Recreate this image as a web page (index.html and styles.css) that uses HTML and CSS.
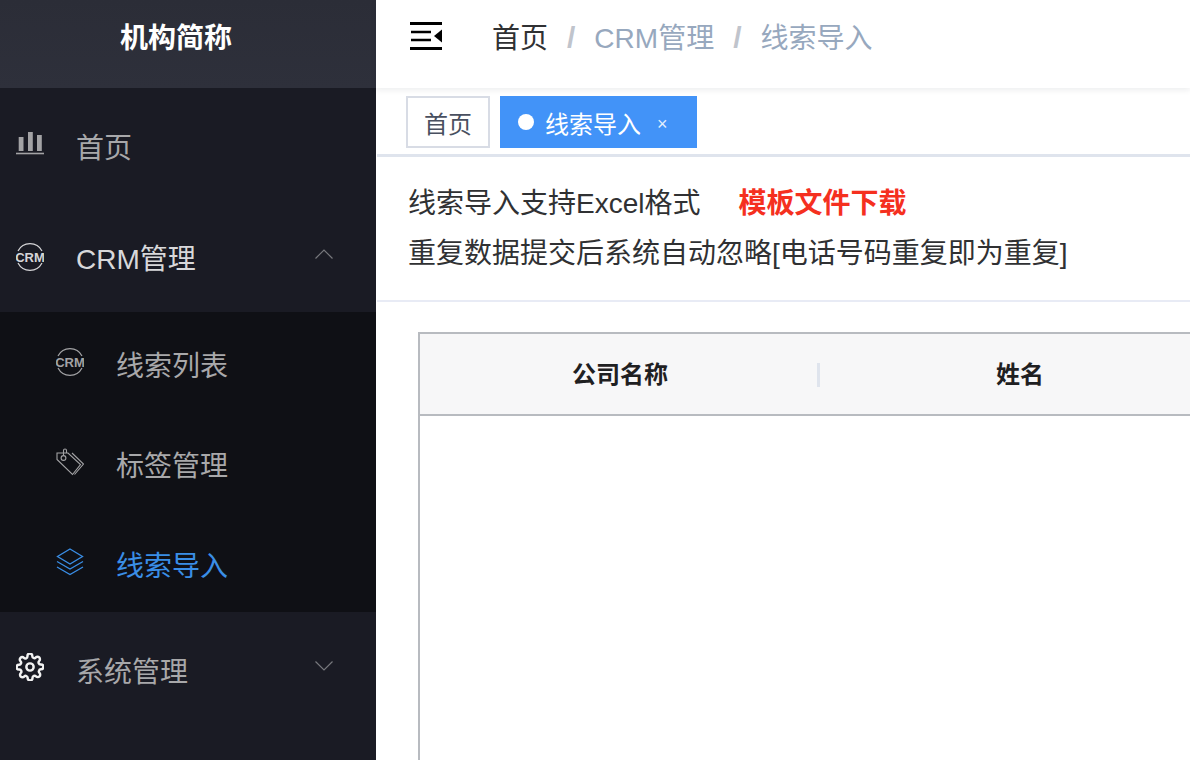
FILE: index.html
```html
<!DOCTYPE html>
<html lang="zh-CN">
<head>
  <meta charset="UTF-8" />
  <title>线索导入</title>
  <link rel="stylesheet" href="styles.css">
</head>
<body>

<div class="layout">
  <div class="sidebar">
    <div class="logo">机构简称</div>

    <div class="menu-item home">
      <svg class="icon" viewBox="0 0 28 28"><path d="M2.700 9h4.800v14H2.700zM12 4h4.800v19H12zM21 7h4.800v16H21z" fill="#a3a3a5"/><path d="M0 25.500h28" stroke="#a3a3a5" stroke-width="1.600"/></svg>
      <span>首页</span>
    </div>

    <div class="menu-item crm">
      <svg class="icon" viewBox="0 0 28 28"><path d="M2 8A13.500 13.500 0 0 1 26 8M2 20A13.500 13.500 0 0 0 26 20" fill="none" stroke="#d6d6d8" stroke-width="1.200"/><text x="14" y="18.700" class="crm-text" fill="#d6d6d8">CRM</text></svg>
      <span>CRM管理</span>
      <svg class="arrow" viewBox="0 0 18 10"><path d="M0.500 9.500L9 1l8.500 8.500" fill="none" stroke="#77787d" stroke-width="1.200"/></svg>
    </div>

    <div class="submenu">
      <div class="sub-item">
        <svg class="icon" viewBox="0 0 28 28"><path d="M2 8A13.500 13.500 0 0 1 26 8M2 20A13.500 13.500 0 0 0 26 20" fill="none" stroke="#a3a3a5" stroke-width="1.200"/><text x="14" y="18.700" class="crm-text" fill="#a3a3a5">CRM</text></svg>
        <span>线索列表</span>
      </div>
      <div class="sub-item">
        <svg class="icon" viewBox="0 0 28 28" fill="none" stroke="#a3a3a5" stroke-width="1.100"><path d="M1 5h11l12.500 11.500-8 10L1 11.500z"/><path d="M16 5l11.500 11-9 10.500"/><circle cx="7.500" cy="10" r="2.400"/><path d="M7.500 7.500V2.500q0-1.500 1.500-1.500t1.500 1.500V5"/></svg>
        <span>标签管理</span>
      </div>
      <div class="sub-item active">
        <svg class="icon" viewBox="0 0 28 28" fill="none" stroke="#3a8ee6" stroke-width="1.300"><path d="M14 1l12.500 7.500L14 16 1.500 8.500z"/><path d="M1 13.500L14 21l13-7.500"/><path d="M1 19L14 26.500 27 19"/></svg>
        <span>线索导入</span>
      </div>
    </div>

    <div class="menu-item sys">
      <svg class="icon" viewBox="0.500 0.500 23 23" fill="none" stroke="#f2f2f2" stroke-width="2"><circle cx="12" cy="12" r="3"/><path d="M19.400 15a1.650 1.650 0 0 0 .33 1.820l.06.06a2 2 0 1 1-2.830 2.830l-.06-.06a1.650 1.650 0 0 0-2.820 1.170V21a2 2 0 0 1-4 0v-.09a1.650 1.650 0 0 0-2.800-1.150l-.06.06a2 2 0 1 1-2.830-2.830l.06-.06a1.650 1.650 0 0 0-1.170-2.820H3a2 2 0 0 1 0-4h.09a1.650 1.650 0 0 0 1.150-2.800l-.06-.06a2 2 0 1 1 2.830-2.830l.06.06a1.650 1.650 0 0 0 2.820-1.170V3a2 2 0 0 1 4 0v.09a1.650 1.650 0 0 0 2.800 1.150l.06-.06a2 2 0 1 1 2.830 2.830l-.06.06a1.650 1.650 0 0 0 1.170 2.820H21a2 2 0 0 1 0 4h-.09a1.650 1.650 0 0 0-1.510 1.110z"/></svg>
      <span>系统管理</span>
      <svg class="arrow" viewBox="0 0 18 10"><path d="M0.500 0.500L9 9l8.500-8.500" fill="none" stroke="#77787d" stroke-width="1.200"/></svg>
    </div>
  </div>

  <div class="main">
    <div class="navbar">
      <svg class="hamburger" viewBox="0 0 32 28"><path d="M0 1.500h32M0 26.500h32" stroke="#000" stroke-width="3"/><path d="M1 10h20M1 18h20" stroke="#000" stroke-width="2.600"/><path d="M32 7.500v13L24 14z" fill="#000"/></svg>
      <div class="breadcrumb">
        <span class="crumb-first">首页</span>
        <span class="sep">/</span>
        <span>CRM管理</span>
        <span class="sep">/</span>
        <span>线索导入</span>
      </div>
    </div>

    <div class="tabs">
      <div class="tab">首页</div>
      <div class="tab tab-active">
        <i class="dot"></i>
        <span>线索导入</span>
        <span class="close">×</span>
      </div>
    </div>

    <div class="content">
      <div class="notice">
        <div class="notice-line">线索导入支持Excel格式<a class="download">模板文件下载</a></div>
        <div class="notice-line">重复数据提交后系统自动忽略[电话号码重复即为重复]</div>
      </div>
      <div class="table-wrap">
        <div class="table">
          <div class="table-head">
            <div class="th">公司名称</div>
            <div class="th">姓名</div>
          </div>
        </div>
      </div>
    </div>
  </div>
</div>

</body>
</html>
```

FILE: styles.css
```css
* { box-sizing: border-box; }
html, body { margin: 0; height: 100%; overflow: hidden; }
body {
  font-family: "Liberation Sans", "Noto Sans CJK SC", sans-serif;
  background: #fff;
  color: #303133;
}
.layout { display: flex; width: 1190px; height: 760px; overflow: hidden; }

.sidebar { width: 376px; flex: none; background: #1a1b24; color: #a8a8aa; font-size: 28px; }
.logo {
  height: 88px;
  padding-right: 24px;
  background: linear-gradient(#2b2d37, #2e303b);
  color: #fff;
  font-size: 28px;
  font-weight: bold;
  text-align: center;
  line-height: 78px;
}
.menu-item { display: flex; align-items: center; padding-left: 16px; position: relative; }
.menu-item .icon, .sub-item .icon { width: 28px; height: 28px; flex: none; margin-right: 32px; position: relative; top: 0; }
.home { height: 120px; align-items: flex-start; padding-top: 38px; }
.crm { height: 104px; color: #d8d8da; padding-bottom: 6px; }
.sys { height: 116px; align-items: flex-start; padding-top: 38px; }
.sys .icon { top: 3px; }
.home .icon { top: 2px; }
.arrow { position: absolute; left: 315px; width: 18px; height: 10px; }
.crm .arrow { top: 41px; }
.sys .arrow { top: 49px; }

.submenu { background: #0f1015; }
.sub-item { height: 100px; display: flex; align-items: center; padding-left: 56px; padding-top: 4px; }
.sub-item .icon { top: -2px; }
.active { color: #3a8ee6; }
.crm-text { font-size: 13px; font-weight: bold; text-anchor: middle; font-family: "Liberation Sans", sans-serif; }

.main { width: 814px; flex: none; display: flex; flex-direction: column; }
.navbar {
  height: 88px;
  flex: none;
  display: flex;
  align-items: center;
  padding-left: 34px;
  padding-bottom: 16px;
  position: relative;
  box-shadow: 0 2px 6px rgba(0, 21, 41, 0.08);
}
.hamburger { width: 32px; height: 28px; flex: none; margin-right: 50px; }
.breadcrumb { display: flex; align-items: baseline; font-size: 28px; color: #97a8be; }
.crumb-first { color: #303133; }
.sep { color: #c0c4cc; margin: 0 19px; font-size: 30px; font-weight: bold; }

.tabs { height: 66px; flex: none; padding: 8px 0 0 30px; display: flex; gap: 10px; background: #fff; }
.tab {
  height: 52px;
  width: 84px;
  border: 2px solid #d8dce5;
  font-size: 24px;
  color: #495060;
  text-align: center;
  line-height: 53px;
}
.tab-active {
  width: 197px;
  border: none;
  background: #4293f8;
  color: #fff;
  display: flex;
  align-items: center;
  padding-left: 18px;
  line-height: normal;
}
.dot { width: 16px; height: 16px; border-radius: 50%; background: #fff; margin-right: 11px; }
.close { font-size: 18px; margin-left: 16px; margin-top: 4px; opacity: 0.85; }

.content { flex: none; height: 606px; border-top: 3px solid #dfe4ed; margin-left: 1px; }
.notice { height: 145px; padding: 18px 0 0 31px; border-bottom: 2px solid #e8ebf5; font-size: 28px; border-top-left-radius: 4px; }
.notice-line { height: 50px; line-height: 58px; white-space: nowrap; color: #303133; }
.notice-line + .notice-line { height: 51px; }
.download { color: #f5301f; font-weight: bold; margin-left: 38px; }

.table-wrap { padding: 30px 0 0 41px; }
.table { width: 1000px; height: 500px; border-left: 2px solid #b8bbc0; border-top: 2px solid #b8bbc0; }
.table-head { height: 82px; display: flex; background: #f7f7f8; border-bottom: 2px solid #b8bbc0; align-items: center; }
.th { width: 400px; flex: none; text-align: center; font-size: 24px; font-weight: bold; color: #1f2022; border-right: 3px solid #dfe4ed; height: 24px; line-height: 24px; position: relative; top: 1px; }
.th:first-child { padding-left: 3px; }
.th:last-child { border-right: none; }
```
